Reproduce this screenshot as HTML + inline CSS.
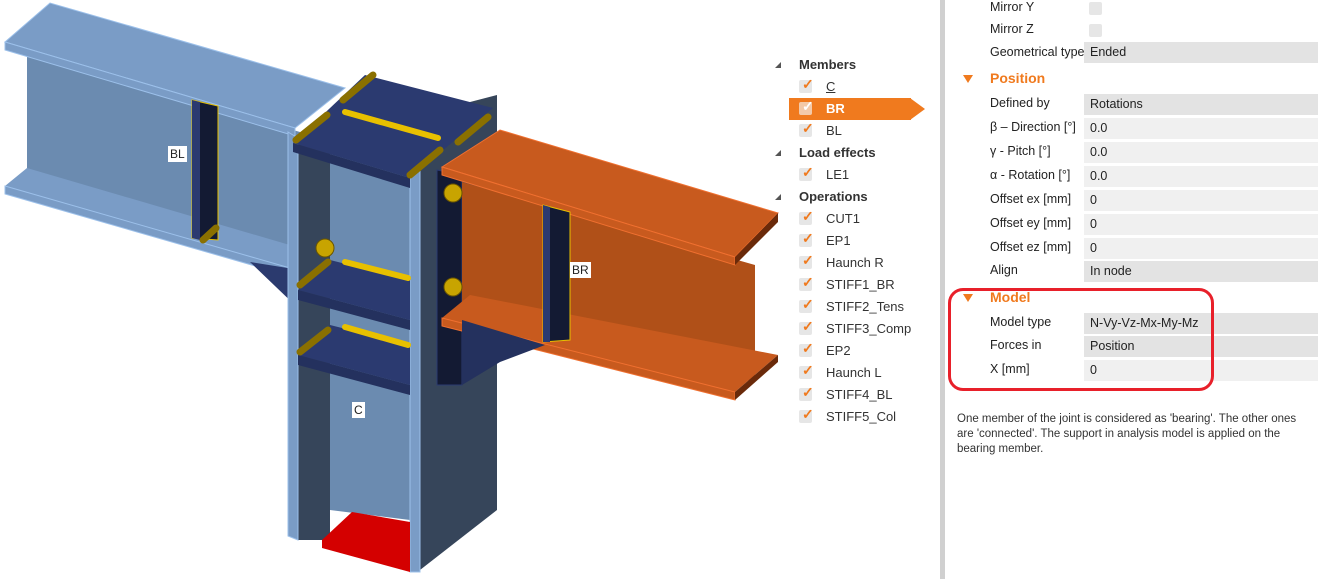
<!DOCTYPE html>
<html><head><meta charset="utf-8"><style>
body{margin:0;width:1318px;height:579px;background:#fff;position:relative;overflow:hidden;font-family:"Segoe UI","Liberation Sans",sans-serif;font-size:12.5px;color:#222}
.a{position:absolute;white-space:nowrap}
.h{font-weight:bold;font-size:13px;color:#333}
.cb{position:absolute;width:13px;height:13px;background:#e6e6e6;border-radius:2px}
.ck{position:absolute;color:#f07a1e;font-size:14px;font-weight:bold;line-height:13px}
.tri{position:absolute;width:0;height:0;border-left:6px solid transparent;border-bottom:6px solid #555}
.lab{position:absolute;left:990px}
.val{position:absolute;left:1084px;width:234px;height:21px;background:#f0f0f0;line-height:21px;padding-left:6px;box-sizing:border-box}
.val.d{background:#e3e3e3}
.sec{position:absolute;font-weight:bold;font-size:14px;color:#f07a1e}
.stri{position:absolute;left:963px;width:0;height:0;border-left:5px solid transparent;border-right:5px solid transparent;border-top:8px solid #f07a1e}
</style></head><body>
<svg class="a" style="left:0;top:0" width="940" height="579" viewBox="0 0 940 579">
<polygon points="27,53 300,132 300,270 27,190" fill="#6b8bb0"/>
<polygon points="5,42 50,3 345,88 295,128" fill="#7a9cc6" stroke="#9cc0ea" stroke-width="1"/>
<polygon points="5,42 295,128 295,136 5,50" fill="#7a9cc6" stroke="#9cc0ea"/>
<polygon points="5,186 27,168 300,248 290,268" fill="#7a9cc6"/>
<polygon points="5,186 290,268 290,276 5,194" fill="#7a9cc6" stroke="#9cc0ea"/>
<polygon points="250,262 300,270 300,310" fill="#2b3a6e"/>
<polygon points="192,100 218,106 218,240 192,238" fill="#131a33" stroke="#e8c000"/>
<polygon points="192,100 200,102 200,240 192,238" fill="#2b3a70"/>
<polygon points="420,115 497,95 497,510 420,570" fill="#36455a"/>
<polygon points="298,140 330,150 330,540 298,540" fill="#36455a"/>
<polygon points="330,150 410,170 410,520 330,510" fill="#6b8bb0"/>
<polygon points="288,132 298,138 298,540 288,536" fill="#7a9cc6" stroke="#9cc0ea"/>
<polygon points="410,170 420,165 420,572 410,572" fill="#7a9cc6" stroke="#9cc0ea"/>
<polygon points="293,143 365,75 493,108 410,178" fill="#2b3a70"/>
<polygon points="293,143 410,178 410,188 293,152" fill="#24315e"/>
<polygon points="298,290 330,260 410,280 410,320" fill="#2b3a70"/>
<polygon points="298,290 410,320 410,330 298,300" fill="#24315e"/>
<polygon points="298,355 330,325 410,345 410,385" fill="#2b3a70"/>
<polygon points="298,355 410,385 410,395 298,365" fill="#24315e"/>
<polygon points="322,540 352,512 410,522 410,572 322,548" fill="#d40000"/>
<g stroke="#e8c000" stroke-width="6" stroke-linecap="round">
<line x1="345" y1="112" x2="438" y2="138"/>
<line x1="345" y1="262" x2="408" y2="278"/>
<line x1="345" y1="327" x2="408" y2="345"/>
</g>
<g stroke="#8a7000" stroke-width="7" stroke-linecap="round">
<line x1="296" y1="140" x2="327" y2="115"/><line x1="343" y1="100" x2="373" y2="75"/>
<line x1="300" y1="285" x2="328" y2="262"/><line x1="300" y1="352" x2="328" y2="330"/>
<line x1="410" y1="175" x2="440" y2="150"/><line x1="458" y1="142" x2="488" y2="117"/>
<line x1="203" y1="240" x2="216" y2="228"/>
</g>
<polygon points="437,170 462,175 462,385 437,385" fill="#131a33" stroke="#2b3a70"/>
<polygon points="462,182 755,265 755,382 462,318" fill="#b05018"/>
<polygon points="442,167 500,130 778,213 735,257" fill="#c85a1e" stroke="#f07030"/>
<polygon points="442,167 735,257 735,265 442,175" fill="#c85a1e" stroke="#f07030"/>
<polygon points="735,257 778,213 778,222 735,265" fill="#6a2a0a"/>
<polygon points="442,318 470,295 778,355 735,392" fill="#c85a1e"/>
<polygon points="442,318 735,392 735,400 442,326" fill="#c85a1e" stroke="#f07030"/>
<polygon points="735,392 778,355 778,362 735,400" fill="#6a2a0a"/>
<polygon points="462,320 545,345 500,362 462,385" fill="#24315e"/>
<polygon points="543,205 570,212 570,340 543,342" fill="#131a33" stroke="#e8c000"/>
<polygon points="543,205 550,207 550,342 543,342" fill="#2b3a70"/>
<g fill="#c8a400" stroke="#6a5500"><circle cx="453" cy="193" r="9"/><circle cx="453" cy="287" r="9"/><circle cx="325" cy="248" r="9"/></g>
</svg>
<div class="a" style="left:168px;top:146px;background:#fff;padding:1px 2px;font-family:'Liberation Sans';font-size:12px">BL</div>
<div class="a" style="left:570px;top:262px;background:#fff;padding:1px 2px;font-family:'Liberation Sans';font-size:12px">BR</div>
<div class="a" style="left:352px;top:402px;background:#fff;padding:1px 2px;font-family:'Liberation Sans';font-size:12px">C</div>

<div class="tri" style="left:775px;top:62px"></div>
<div class="a h" style="left:799px;top:57px">Members</div>
<div class="a" style="left:789px;top:98px;width:122px;height:22px;background:#f07a1e"></div>
<div class="a" style="left:910px;top:98px;width:0;height:0;border-top:11px solid transparent;border-bottom:11px solid transparent;border-left:15px solid #f07a1e"></div>
<div class="tri" style="left:775px;top:150px"></div>
<div class="a h" style="left:799px;top:145px">Load effects</div>
<div class="tri" style="left:775px;top:194px"></div>
<div class="a h" style="left:799px;top:189px">Operations</div>
<div id="tree"></div>
<script>
var items=[["C",87],["BR",109],["BL",131],["LE1",175],["CUT1",219],["EP1",241],["Haunch R",263],["STIFF1_BR",285],["STIFF2_Tens",307],["STIFF3_Comp",329],["EP2",351],["Haunch L",373],["STIFF4_BL",395],["STIFF5_Col",417]];
var h="";items.forEach(function(it){var y=it[1];var br=it[0]=="BR";
h+='<div class="cb" style="left:799px;top:'+(y-7)+'px'+(br?';background:#f3c9a8':'')+'"></div>';
h+='<div class="ck" style="left:802px;top:'+(y-9)+'px'+(br?';color:#fff':'')+'">✓</div>';
h+='<div class="a" style="left:826px;top:'+(y-8)+'px;font-size:13px;'+(br?'color:#fff;font-weight:bold':'color:#333')+(it[0]=="C"?';text-decoration:underline':'')+'">'+it[0]+'</div>';});
document.getElementById("tree").innerHTML=h;
</script>

<div class="a" style="left:940px;top:0;width:5px;height:579px;background:#d0d0d0"></div>

<div class="a lab" style="top:0px">Mirror Y</div>
<div class="cb" style="left:1089px;top:2px"></div>
<div class="a lab" style="top:22px">Mirror Z</div>
<div class="cb" style="left:1089px;top:24px"></div>
<div class="a lab" style="top:45px">Geometrical type</div>
<div class="val d" style="top:42px">Ended</div>
<div class="stri" style="top:75px"></div>
<div class="sec" style="left:990px;top:70px">Position</div>
<div class="a lab" style="top:96px">Defined by</div><div class="val d" style="top:94px">Rotations</div>
<div class="a lab" style="top:120px">β – Direction [°]</div><div class="val" style="top:118px">0.0</div>
<div class="a lab" style="top:144px">γ - Pitch [°]</div><div class="val" style="top:142px">0.0</div>
<div class="a lab" style="top:168px">α - Rotation [°]</div><div class="val" style="top:166px">0.0</div>
<div class="a lab" style="top:192px">Offset ex [mm]</div><div class="val" style="top:190px">0</div>
<div class="a lab" style="top:216px">Offset ey [mm]</div><div class="val" style="top:214px">0</div>
<div class="a lab" style="top:240px">Offset ez [mm]</div><div class="val" style="top:238px">0</div>
<div class="a lab" style="top:263px">Align</div><div class="val d" style="top:261px">In node</div>
<div class="stri" style="top:294px"></div>
<div class="sec" style="left:990px;top:289px">Model</div>
<div class="a lab" style="top:315px">Model type</div><div class="val d" style="top:313px">N-Vy-Vz-Mx-My-Mz</div>
<div class="a lab" style="top:338px">Forces in</div><div class="val d" style="top:336px">Position</div>
<div class="a lab" style="top:362px">X [mm]</div><div class="val" style="top:360px">0</div>
<div class="a" style="left:948px;top:288px;width:260px;height:97px;border:3px solid #e8202a;border-radius:15px"></div>
<div class="a" style="left:957px;top:412px;font-size:11.5px;color:#333;line-height:15px">One member of the joint is considered as 'bearing'. The other ones<br>are 'connected'. The support in analysis model is applied on the<br>bearing member.</div>
</body></html>
